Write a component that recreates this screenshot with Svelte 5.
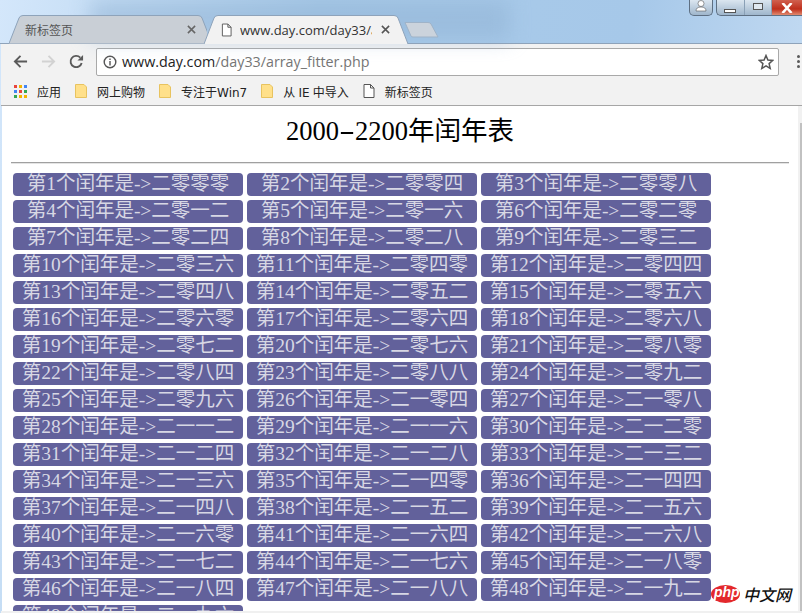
<script>
  const digits = ['零', '一', '二', '三', '四', '五', '六', '七', '八', '九'];
  const years = [];
  for (let y = 2000; y <= 2200; y += 4) {
    if (y % 400 === 0 || y % 100 !== 0) years.push(y);
  }
  const items = years.slice(0, 49).map((y, i) => ({
    n: i + 1,
    cn: String(y).split('').map((d) => digits[+d]).join('')
  }));
  const dots = ['#e8453c','#f4b400','#4285f4','#4285f4','#e8453c','#34a853','#34a853','#f4b400','#f4b400'];
  const bookmarks = ['网上购物', '专注于Win7', '从 IE 中导入'];
</script>

<div class="window">
  <div class="backdrop"></div>
  <div class="strip">
    <div class="tab inactive">
      <svg class="shape" viewBox="0 0 198 29" preserveAspectRatio="none"><path d="M0 28.5 L10 3 Q11 .5 14 .5 L189 .5 Q192 .5 193 3 L203 28.5" fill="#c9cfd6" stroke="#8ea3ba"/></svg>
      <span class="tabtext">新标签页</span>
      <svg class="close" viewBox="0 0 10 10"><path d="M1 1 L9 9 M9 1 L1 9" stroke="#666" stroke-width="1.7"/></svg>
    </div>
    <div class="tab active">
      <svg class="shape" viewBox="0 0 204 29" preserveAspectRatio="none"><path d="M0 29 L10 3 Q11 .5 14 .5 L190 .5 Q193 .5 194 3 L204 29" fill="#f2f2f2" stroke="#8ea3ba"/></svg>
      <svg class="doc" viewBox="0 0 12 14"><path d="M1.5 .5 H7.5 L11 4 V13.5 H1.5 Z M7.5 .5 V4 H11" fill="#fff" stroke="#555"/></svg>
      <span class="tabtext url">www.day.com/day33/a</span>
      <svg class="close" viewBox="0 0 10 10"><path d="M1 1 L9 9 M9 1 L1 9" stroke="#555" stroke-width="1.7"/></svg>
    </div>
    <svg class="newtab" viewBox="0 0 36 18"><path d="M1 1.5 H24 Q26 1.5 27 3 L34 16 H9 Q7.500 16 7 15 Z" fill="#cbd3dc" stroke="#9fb3c8"/></svg>
  </div>

  <div class="controls">
    <div class="ctl user"><svg viewBox="0 0 14 12"><circle cx="7" cy="3.500" r="3" fill="#fff" stroke="#555" stroke-width=".6"/><path d="M2 11 Q2 7 7 7 Q12 7 12 11 Z" fill="#fff" stroke="#555" stroke-width=".6"/></svg></div>
    <div class="ctl group">
      <div class="btn"><span class="min"></span></div>
      <div class="btn"><span class="max"></span></div>
      <div class="btn closebtn"><svg viewBox="0 0 12 10"><path d="M1.500 0 L10.500 10 M10.500 0 L1.500 10" stroke="#fff" stroke-width="2.600"/></svg></div>
    </div>
  </div>

  <div class="toolbar">
    <svg class="nav" viewBox="0 0 16 16"><path d="M15 8 H2 M8 2 L2 8 L8 14" fill="none" stroke="#5a5a5a" stroke-width="2"/></svg>
    <svg class="nav" viewBox="0 0 16 16"><path d="M1 8 H14 M8 2 L14 8 L8 14" fill="none" stroke="#d2d2d2" stroke-width="2"/></svg>
    <svg class="nav" viewBox="0 0 16 16"><path d="M13.500 9.500 A6 6 0 1 1 12 3.800" fill="none" stroke="#5a5a5a" stroke-width="2"/><path d="M15 1 V7 H9 Z" fill="#5a5a5a"/></svg>
    <div class="omnibox">
      <svg class="info" viewBox="0 0 14 14"><circle cx="7" cy="7" r="5.800" fill="none" stroke="#555" stroke-width="1.400"/><rect x="6.300" y="6" width="1.400" height="4.500" fill="#555"/><rect x="6.300" y="3.500" width="1.400" height="1.500" fill="#555"/></svg>
      <span class="address"><b>www.day.com</b>/day33/array_fitter.php</span>
      <svg class="star" viewBox="0 0 16 16"><path d="M8 1.500 L9.900 6 L14.800 6.400 L11.100 9.600 L12.200 14.400 L8 11.900 L3.800 14.400 L4.900 9.600 L1.200 6.400 L6.100 6 Z" fill="none" stroke="#555" stroke-width="1.500"/></svg>
    </div>
    <div class="kebab"><i></i><i></i><i></i></div>
  </div>

  <div class="bookmarks">
    <div class="bm first">
      <span class="apps">{#each dots as c}<i style="background:{c}"></i>{/each}</span>
      <span>应用</span>
    </div>
    {#each bookmarks as b}
      <div class="bm">
        <svg class="folder" viewBox="0 0 12 14"><path d="M.5 .5 H9 L11.500 3 V13.500 H.5 Z" fill="#ffe08a" stroke="#e8c35f"/></svg>
        <span>{b}</span>
      </div>
    {/each}
    <div class="bm">
      <svg class="folder" viewBox="0 0 12 14"><path d="M1 .5 H7.500 L11 4 V13.500 H1 Z M7.500 .5 V4 H11" fill="#fff" stroke="#555"/></svg>
      <span>新标签页</span>
    </div>
  </div>

  <main class="page">
    <h1>2000<span class="dash">-</span>2200年闰年表</h1>
    <hr />
    <div class="list">
      {#each items as it}
        <div class="year">第{it.n}个闰年是-&gt;{it.cn}</div>
      {/each}
    </div>
    <div class="logo">
      <svg viewBox="0 0 29 18"><ellipse cx="14.500" cy="9" rx="14.500" ry="9" fill="#e3282c"/></svg>
      <span class="php">php</span>
      <span class="cnw">中文网</span>
    </div>
    <div class="scrollbar"><div class="thumb"></div></div>
  </main>
  <div class="footer"></div>
</div>

<style>
  :global(body) { margin: 0; overflow: hidden; background: #fff; }
  .window {
    position: relative;
    width: 802px;
    height: 613px;
    overflow: hidden;
    display: flex;
    flex-direction: column;
    font-family: "Noto Sans CJK SC", sans-serif;
    background: linear-gradient(100deg, #d4e7fb 0%, #a9cbe9 35%, #a6c8e9 70%, #cfe2f6 100%);
  }
  .backdrop {
    position: absolute;
    left: 90px; top: 0;
    width: 420px; height: 40px;
    background: #8fb1d3;
    opacity: .5;
    filter: blur(10px);
  }
  .strip {
    position: relative;
    height: 44px;
    flex: none;
    display: flex;
    align-items: flex-end;
    padding-left: 9px;
    box-sizing: border-box;
    border-bottom: 1px solid #8ea3ba;
  }
  .tab {
    position: relative;
    height: 29px;
    display: flex;
    align-items: center;
    box-sizing: border-box;
    margin-bottom: -1px;
  }
  .shape { position: absolute; inset: 0; width: 100%; height: 100%; }
  .inactive { width: 198px; padding-left: 16px; }
  .active { width: 204px; padding-left: 17px; margin-left: -3px; z-index: 1; }
  .tabtext { position: relative; font-size: 12px; color: #555; white-space: nowrap; flex: 1; overflow: hidden; }
  .url { font-family: "Open Sans", sans-serif; font-size: 13px; color: #333; margin-left: 8px; }
  .close { position: relative; width: 9px; height: 9px; margin-right: 11px; margin-left: 9px; flex: none; }
  .active .close { margin-right: 18px; }
  .doc { position: relative; width: 11px; height: 14px; flex: none; }
  .newtab { width: 36px; height: 18px; margin-left: -4px; margin-bottom: 4px; }
  .controls {
    position: absolute;
    top: 0; right: 0;
    display: flex;
    gap: 3px;
  }
  .ctl {
    height: 15px;
    border: 1px solid #5e6f82;
    border-top: 0;
    border-radius: 0 0 5px 5px;
    background: linear-gradient(#dbe6f0, #9fb6cc);
    box-sizing: content-box;
  }
  .user { width: 22px; display: flex; justify-content: center; }
  .user svg { width: 14px; height: 12px; }
  .group { display: flex; width: 85px; border-radius: 0 0 0 5px; border-right: 0; }
  .btn { width: 28px; display: flex; justify-content: center; align-items: center; border-right: 1px solid #8aa0b6; box-sizing: border-box; }
  .min { width: 10px; height: 2px; margin-top: 6px; background: #fff; border: 1px solid #555; }
  .max { width: 8px; height: 5px; margin-top: -2px; background: #dfe8f0; border: 1.500px solid #555; }
  .closebtn { background: linear-gradient(#d0604f, #bf2f1c 60%, #e08a70); border: 0; width: 30px; }
  .closebtn svg { width: 14px; height: 10px; }
  .toolbar {
    flex: none;
    height: 33px;
    margin-left: 1px;
    background: #f2f2f2;
    display: flex;
    align-items: center;
    padding: 2px 0 0 12px;
    box-sizing: border-box;
    gap: 13px;
  }
  .nav { width: 15px; height: 15px; flex: none; }
  .omnibox {
    width: 683px;
    height: 28px;
    margin-left: -1px;
    display: flex;
    align-items: center;
    background: #fff;
    border: 1px solid #a9a9a9;
    border-radius: 2px;
    box-sizing: border-box;
    padding: 0 4px 0 6px;
    flex: none;
  }
  .info { width: 14px; height: 14px; flex: none; }
  .address { flex: 1; margin-left: 5px; font-family: "Open Sans", sans-serif; font-size: 14.3px; color: #757575; white-space: nowrap; }
  .address b { font-weight: 400; color: #222; }
  .star { width: 16px; height: 16px; flex: none; }
  .kebab { display: flex; flex-direction: column; gap: 2px; margin-left: 5px; }
  .kebab i { width: 3px; height: 3px; border-radius: 50%; background: #5a5a5a; }
  .bookmarks {
    flex: none;
    height: 29px;
    margin-left: 1px;
    background: #f2f2f2;
    border-bottom: 1px solid #a6a6a6;
    box-sizing: border-box;
    display: flex;
    align-items: center;
    padding-left: 13px;
    font-family: "DejaVu Sans", "Noto Sans CJK SC", sans-serif;
    font-size: 12px;
    color: #222;
    gap: 14px;
    word-spacing: -.6px;
  }
  .bm { display: flex; align-items: center; gap: 10px; white-space: nowrap; }
  .apps { display: grid; grid-template-columns: repeat(3, 3px); gap: 2px; }
  .apps i { width: 3px; height: 3px; }
  .folder { width: 12px; height: 14px; flex: none; }
  .page {
    position: relative;
    flex: 1;
    min-height: 0;
    overflow: hidden;
    background: #fff;
    margin-left: 2px;
    padding: 0 13px 0 9px;
    font-family: "Liberation Serif", "Noto Sans CJK SC", serif;
  }
  h1 {
    margin: 0;
    height: 50px;
    line-height: 50px;
    font-size: 26.5px;
    font-weight: 400;
    text-align: center;
    color: #000;
  }
  .dash { display: inline-block; font-family: "Liberation Mono", monospace; transform: scaleX(1.7); }
  hr {
    margin: 6px 0 0;
    border: 0;
    border-top: 1px solid #a0a0a0;
    border-bottom: 1px solid #e4e4e4;
  }
  .list {
    margin-top: 9px;
    padding-left: 2px;
    display: grid;
    grid-template-columns: repeat(3, 230px);
    grid-auto-rows: 23px;
    gap: 4px;
  }
  .year {
    background: #62619b;
    color: #d7d7e4;
    border-radius: 4px;
    font-size: 19.5px;
    line-height: 22px;
    text-align: center;
    white-space: nowrap;
    overflow: hidden;
  }
  .logo {
    position: absolute;
    right: 11px;
    bottom: 8px;
    display: flex;
    align-items: center;
    height: 18px;
  }
  .logo svg { width: 29px; height: 18px; }
  .php {
    position: absolute;
    left: 3px; top: -1px;
    font: italic 700 14px "Liberation Sans", sans-serif;
    color: #fff;
  }
  .cnw { margin-left: 3px; font: italic 500 16px "Noto Sans CJK SC", sans-serif; color: #111; line-height: 18px; }
  .scrollbar {
    position: absolute;
    top: 0; right: 0; bottom: 0;
    width: 4px;
    background: #f1f1f1;
    padding: 17px 0 0 2px;
    box-sizing: border-box;
  }
  .thumb { height: 100%; background: #c1c1c1; }
  .footer { flex: none; height: 2px; margin-left: 1px; background: #f0f0f0; }
</style>
